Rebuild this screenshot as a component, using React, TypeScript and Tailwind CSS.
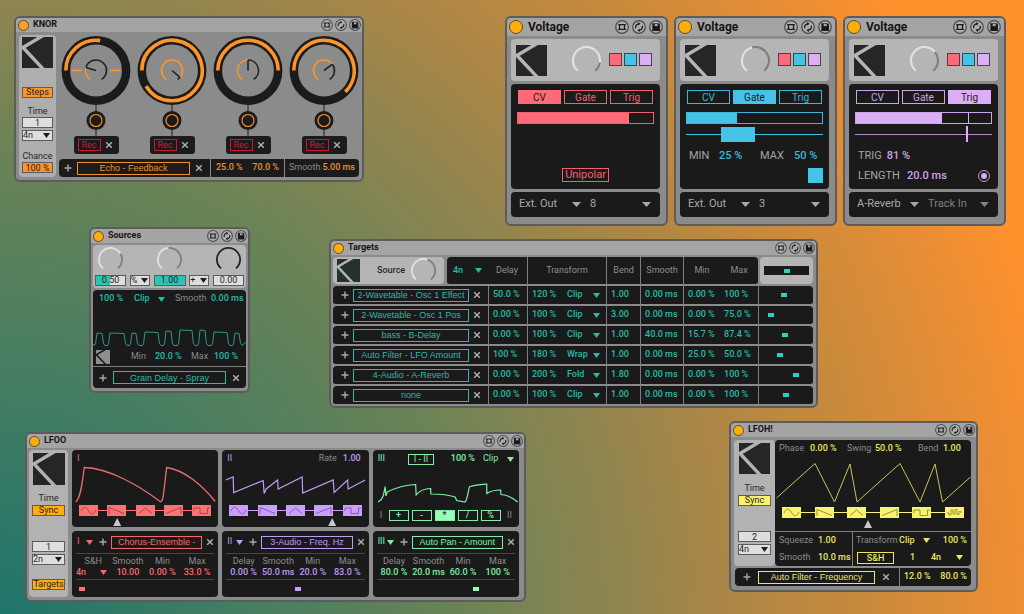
import { useId, type ReactNode } from "react";
import clsx from "clsx";

const TARGET_ROWS = [
  { name: "2-Wavetable - Osc 1 Effect", delay: "50.0 %", amount: "120 %", mode: "Clip", bend: "1.00", smooth: "0.00 ms", min: "0.00 %", max: "100 %", pos: 18 },
  { name: "2-Wavetable - Osc 1 Pos", delay: "0.00 %", amount: "100 %", mode: "Clip", bend: "3.00", smooth: "0.00 ms", min: "0.00 %", max: "75.0 %", pos: 5 },
  { name: "bass - B-Delay", delay: "0.00 %", amount: "100 %", mode: "Clip", bend: "1.00", smooth: "40.0 ms", min: "15.7 %", max: "87.4 %", pos: 19 },
  { name: "Auto Filter - LFO Amount", delay: "100 %", amount: "180 %", mode: "Wrap", bend: "1.00", smooth: "0.00 ms", min: "25.0 %", max: "50.0 %", pos: 14 },
  { name: "4-Audio - A-Reverb", delay: "0.00 %", amount: "200 %", mode: "Fold", bend: "1.80", smooth: "0.00 ms", min: "0.00 %", max: "100 %", pos: 30 },
  { name: "none", delay: "0.00 %", amount: "100 %", mode: "Clip", bend: "1.00", smooth: "0.00 ms", min: "0.00 %", max: "100 %", pos: 20 },
];

const KNOBS = [
  { ring: 98, value: 0.25, marks: true },
  { ring: 329, value: 0.94 },
  { ring: 180, value: 0.5 },
  { ring: 225, value: 0.68 },
];

const SHAPES: Record<string, string> = {
  sine: "M2 6 C4 1 7 1 9.5 5.500 S15 10 17 5",
  down: "M2 9 V2.500 L17 8.500",
  tri: "M3 8.500 L9.500 3 L16 8.500",
  up: "M2 8.500 L17 2.500 V9",
  square: "M2 6 V3 H8 V8.500 H15.500 V3 H18",
  random: "M2 6 H4 V8 H6 V3 H8 V7 H10 V2.500 H12 V7.500 H14 V4.500 H16 V6",
};

/* ---------- small pieces ---------- */

function polar(cx: number, cy: number, r: number, deg: number) {
  const a = (deg * Math.PI) / 180;
  return [cx + r * Math.cos(a), cy + r * Math.sin(a)];
}

function arc(cx: number, cy: number, r: number, from: number, to: number) {
  const [x1, y1] = polar(cx, cy, r, from);
  const [x2, y2] = polar(cx, cy, r, to);
  return `M${x1} ${y1} A${r} ${r} 0 ${to - from > 180 ? 1 : 0} 1 ${x2} ${y2}`;
}

function Dial({ value, className, on = "#e2e2e2", off = "#7d7d7d" }: { value: number; className: string; on?: string; off?: string }) {
  const mid = 130 + 280 * value;
  return (
    <svg viewBox="0 0 28 28" className={className} fill="none" strokeWidth="2">
      {value < 1 && <path d={arc(14, 14, 13, mid, 410)} stroke={off} />}
      <path d={arc(14, 14, 13, 130, mid)} stroke={on} />
    </svg>
  );
}

function Logo({ className, line = "#b2b2b2", fill = "#262626" }: { className: string; line?: string; fill?: string }) {
  return (
    <svg viewBox="0 0 31 31" className={clsx("shrink-0", className)}>
      <rect width="31" height="31" fill={fill} />
      <path d="M22 -2 L1 10.500 L23 34" fill="none" stroke={line} strokeWidth="3.4" />
    </svg>
  );
}

interface SelectProps {
  value: string;
  label: string;
  className?: string;
  arrow?: string;
  size?: string;
}

function Select({ value, label, className, arrow = "right-0", size = "h-[5px] w-[7px]" }: SelectProps) {
  return (
    <span className={clsx("relative flex items-center", className)}>
      <select aria-label={label} defaultValue={value} className="h-full w-full appearance-none bg-transparent outline-none">
        <option>{value}</option>
      </select>
      <svg viewBox="0 0 8 6" preserveAspectRatio="none" className={clsx("pointer-events-none absolute", arrow, size)}>
        <path d="M0 0 H8 L4 6 Z" fill="currentColor" />
      </svg>
    </span>
  );
}

function AddButton() {
  return (
    <button aria-label="Add" className="flex w-4 shrink-0 items-center justify-center text-[#a8a8a8]">
      <svg viewBox="0 0 8 8" className="size-2" stroke="currentColor" strokeWidth="1.4">
        <path d="M4 0.500 V7.500 M0.500 4 H7.500" />
      </svg>
    </button>
  );
}

function ClearButton() {
  return (
    <button aria-label="Clear" className="flex w-4 shrink-0 items-center justify-center text-[#b0b0b0]">
      <svg viewBox="0 0 8 8" className="size-2" stroke="currentColor" strokeWidth="1.4">
        <path d="M1.200 1.200 L6.800 6.800 M6.800 1.200 L1.200 6.800" />
      </svg>
    </button>
  );
}

function MapButton({ children, className }: { children: ReactNode; className?: string }) {
  return (
    <button
      className={clsx(
        "block h-[13px] border border-current font-['Liberation_Sans',Arial,sans-serif] text-[9px] leading-[10px] font-normal whitespace-nowrap",
        className,
      )}
    >
      {children}
    </button>
  );
}

function HeaderIcons({ big }: { big?: boolean }) {
  const size = big ? "size-[14px]" : "size-3";
  const icons = [
    { label: "Unfold", body: <path d="M4.500 4.700 H9.500 V9.300 H4.500 Z M3.200 4.700 H10.800 M3.200 9.300 H10.800" /> },
    {
      label: "Swap",
      body: (
        <>
          <path d="M3.800 8.300 A3.400 3.400 0 0 1 6.500 3.800 M10.200 5.700 A3.400 3.400 0 0 1 7.500 10.200" />
          <path d="M6 2 L8.600 3.700 L6.200 5.500 Z M8 12 L5.400 10.300 L7.800 8.500 Z" fill="#1c1c1c" stroke="none" />
        </>
      ),
    },
    {
      label: "Save",
      body: (
        <>
          <path d="M4 4 H9.500 L10.300 5 V10.300 H4 Z" fill="#161616" />
          <path d="M5.700 3.800 H8.700 V6.200 H5.700 Z" fill="#a8a8a8" stroke="none" />
        </>
      ),
    },
  ];
  return (
    <span className={clsx("ml-auto flex", big ? "gap-[3px]" : "gap-[2px]")}>
      {icons.map((icon) => (
        <button key={icon.label} aria-label={icon.label}>
          <svg viewBox="0 0 14 14" className={size} fill="none" stroke="#1c1c1c" strokeWidth="1.3">
            <circle cx="7" cy="7" r="6.300" stroke="#4a4a4a" strokeWidth="1.200" fill="#adadad" />
            {icon.body}
          </svg>
        </button>
      ))}
    </span>
  );
}

interface DeviceProps {
  title: string;
  className: string;
  dot?: string;
  big?: boolean;
  children: ReactNode;
}

function Device({ title, className, dot = "bg-[#ffae0b]", big, children }: DeviceProps) {
  return (
    <section className={clsx("absolute rounded-md border-2 border-[#5c5c5c] bg-[#8b8b8b]", className)}>
      <header
        className={clsx(
          "flex items-center rounded-t bg-[#a4a4a4] pl-[2px] font-bold text-[#141414]",
          big ? "h-[18px] gap-[5px] pr-[3px] text-[12px]" : "h-[14px] gap-1 pr-px text-[9px]",
        )}
      >
        <button
          aria-label="Device activator"
          className={clsx("shrink-0 rounded-full border border-[#5e4a28]", dot, big ? "size-[14px]" : "size-[11px]")}
        />
        <h2>{title}</h2>
        <HeaderIcons big={big} />
      </header>
      {children}
    </section>
  );
}

const box = "h-[11px] w-full border border-[#5c5c5c] text-center text-[9px] leading-none text-[#1e1e1e]";

function TimeBoxes({ amount, unit, id, gap }: { amount: string; unit: string; id: string; gap: string }) {
  return (
    <>
      <input id={id} defaultValue={amount} className={clsx(box, gap, "shrink-0 bg-[#dedede] outline-none")} />
      <Select
        label="Unit"
        value={unit}
        arrow="right-[2px]"
        className="mt-[2px] h-[11px] w-full shrink-0 border border-[#5c5c5c] bg-[#dedede] text-[9px] leading-none text-[#1e1e1e]"
      />
    </>
  );
}

function ShapeRow({ shapes, color, line }: { shapes: string[]; color: string; line: string }) {
  return (
    <div className="flex h-[11px] items-center px-[7px]">
      {shapes.map((name, i) => (
        <span key={name} className={clsx("flex items-center", i > 0 && "flex-1")}>
          {i > 0 && <span className={clsx("h-px flex-1", color)} />}
          <button aria-label={name} className={clsx("h-[11px] w-[19px] shrink-0", color)}>
            <svg viewBox="0 0 19 11" className="h-[11px] w-[19px]" fill="none" stroke={line} strokeWidth="0.9">
              <path d={SHAPES[name]} />
            </svg>
          </button>
        </span>
      ))}
    </div>
  );
}

function Pointer({ at, width }: { at: number; width: number }) {
  return (
    <svg viewBox={`0 0 ${width} 11`} className="h-[11px] w-full">
      <path d={`M${at} 2 L${at + 4} 10 H${at - 4} Z`} fill="#c9c9c9" />
    </svg>
  );
}

/* ---------- KNOR ---------- */

function Knob({ ring, value, marks }: { ring: number; value: number; marks?: boolean }) {
  const mid = 122 + 296 * value;
  const [px, py] = polar(38, 35.5, 10.5, mid);
  return (
    <svg viewBox="0 0 76 101" className="h-[101px] w-full" fill="none">
      <path d="M38 69 V101" stroke="#1f1f1f" strokeWidth="1" />
      <circle cx="38" cy="35.500" r="30.200" stroke="#1b1b1b" strokeWidth="8.500" />
      <path d={arc(38, 35.5, 30.2, 180, 180 + ring)} stroke="#ff9429" strokeWidth="3.600" />
      <path d={arc(38, 35.5, 10.5, mid, 418)} stroke="#222" strokeWidth="1.600" />
      <path d={arc(38, 35.5, 10.5, 122, mid)} stroke="#ff9429" strokeWidth="1.600" />
      <path d={`M38 35.5 L${px} ${py}`} stroke="#222" strokeWidth="1.600" />
      {marks && <path d="M14 35.500 H24 M52 35.500 H62" stroke="#ff9429" strokeWidth="1.300" />}
      <circle cx="38" cy="85.500" r="9.500" fill="#1b1b1b" />
      <circle cx="38" cy="85.500" r="6" stroke="#ff9429" strokeWidth="1.100" />
    </svg>
  );
}

function Knor() {
  const id = useId();
  return (
    <Device title="KNOR" className="top-[16px] left-[14px] w-[350px]" dot="bg-[#ff9f2a]">
      <div className="flex gap-[2px] pt-[3px] pb-[3px] pl-[3px]">
        <div className="flex w-[37px] shrink-0 flex-col items-center rounded bg-[#aeaeae] px-[3px] pt-[2px] text-[9px] leading-[10px] text-[#2a2a2a]">
          <Logo className="size-[31px]" />
          <button className={clsx(box, "mt-[19px] bg-[#ff9429]")}>Steps</button>
          <label htmlFor={id} className="mt-2">Time</label>
          <TimeBoxes id={id} amount="1" unit="4n" gap="mt-px" />
          <label htmlFor={`${id}-chance`} className="mt-[10px]">Chance</label>
          <input id={`${id}-chance`} defaultValue="100 %" className={clsx(box, "mt-px bg-[#ff9429] outline-none")} />
        </div>

        <div className="min-w-0 flex-1">
          <div className="grid grid-cols-4">
            {KNOBS.map((knob, i) => (
              <div key={i} className="flex flex-col items-center">
                <Knob {...knob} />
                <div className="flex h-[18px] w-[45px] items-center rounded-[3px] bg-[#1b1b1b] pl-1">
                  <button className="h-3 w-[23px] border border-[#d3142f] text-[9px] leading-[10px] text-[#d3142f]">Rec</button>
                  <ClearButton />
                </div>
              </div>
            ))}
          </div>

          <div className="mt-[5px] mr-[3px] ml-px flex h-[18px] gap-px overflow-hidden rounded text-[9px] font-medium text-[#f0912d]">
            <div className="flex w-[151px] items-center gap-px bg-[#1b1b1b] pl-px">
              <AddButton />
              <MapButton className="w-[113px]">Echo - Feedback</MapButton>
              <ClearButton />
            </div>
            <div className="flex w-[73px] items-center justify-between bg-[#1b1b1b] px-[5px]">
              <span>25.0 %</span>
              <span>70.0 %</span>
            </div>
            <div className="flex flex-1 items-center justify-between bg-[#1b1b1b] px-1">
              <span className="font-normal text-[#8a8a8a]">Smooth</span>
              <span>5.00 ms</span>
            </div>
          </div>
        </div>
      </div>
    </Device>
  );
}

/* ---------- Voltage ---------- */

interface VoltageProps {
  className: string;
  mode: "CV" | "Gate" | "Trig";
  text: string;
  fill: string;
  dial: number;
  level: number;
  out: string;
  channel: string;
  mutedChannel?: boolean;
  children: ReactNode;
}

function Voltage({ className, mode, text, fill, dial, level, out, channel, mutedChannel, children }: VoltageProps) {
  return (
    <Device big title="Voltage" className={clsx("top-[16px] w-[163px]", className)}>
      <div className="flex flex-col gap-[3px] pt-[3px] pr-[6px] pb-[7px] pl-1">
        <div className="flex h-[42px] items-center rounded bg-[#b5b5b5] pr-2 pl-[5px]">
          <Logo className="size-[31px]" line="#b5b5b5" />
          <Dial value={dial} className="ml-[25px] size-[29px]" />
          <span className="mb-[2px] ml-auto flex gap-[2px]">
            <button aria-label="Pink" className="size-[13px] border border-[#444] bg-[#ff6a78]" />
            <button aria-label="Blue" className="size-[13px] border border-[#444] bg-[#45c3e6]" />
            <button aria-label="Violet" className="size-[13px] border border-[#444] bg-[#dcaef5]" />
          </span>
        </div>

        <div className={clsx("h-[105px] rounded bg-[#1a1a1a] px-[6px] pt-[6px] text-[11px]", text)}>
          <div className="grid grid-cols-3 gap-[3px] px-px">
            {["CV", "Gate", "Trig"].map((name) => (
              <button
                key={name}
                className={clsx(
                  "h-[14px] border text-[10px] leading-[13px]",
                  name === mode ? ["border-transparent text-[#1a1a1a]", fill] : "border-current",
                )}
              >
                {name}
              </button>
            ))}
          </div>
          <div className="relative mt-2 h-3 border border-current">
            <div className={clsx("h-full", fill)} style={{ width: `${level}%` }} />
            {mode === "Trig" && <span className={clsx("absolute inset-y-0 left-[112px] w-px", fill)} />}
          </div>
          {children}
        </div>

        <div className="flex h-[25px] items-center rounded bg-[#1a1a1a] pr-[9px] pl-2 text-[11px] text-[#a9a9a9]">
          <Select label="Output" value={out} className="w-[62px]" size="h-[5px] w-[9px]" />
          <Select
            label="Channel"
            value={channel}
            className={clsx("ml-[9px] flex-1", mutedChannel && "text-[#808080]")}
            size="h-[5px] w-[9px]"
          />
        </div>
      </div>
    </Device>
  );
}

/* ---------- Sources ---------- */

const PULSES = [
  [4, 9, 5], [17, 31, 5], [39, 43, 5], [52, 65, 4], [73, 78, 3], [87, 99, 2], [107, 112, 2], [121, 134, 4], [142, 146, 5],
];

function Sources() {
  const wave = PULSES.map(([a, b, y]) => `L${a - 2.5} 37.5 Q${a - 1} 36 ${a - 1} 32 L${a} ${y + 20} L${b} ${y + 20.5} L${b + 1} 32 Q${b + 1} 36 ${b + 3} 37.5`).join(" ");
  return (
    <Device title="Sources" className="top-[227px] left-[89px] w-[161px]">
      <div className="px-[2px] pt-[2px] pb-[3px]">
        <div className="grid h-[43px] grid-cols-[31px_20px_32px_20px_31px] justify-between rounded bg-[#b5b5b5] px-[2px] pt-[2px] text-[#1e1e1e]">
          <Dial value={0.71} className="mx-auto size-[25px]" />
          <span />
          <Dial value={0.48} className="mx-auto size-[25px]" />
          <span />
          <Dial value={1} on="#222" className="mx-auto size-[25px]" />
          <input aria-label="Depth" defaultValue="0.50" className={clsx(box, "bg-linear-to-r from-[#2cc4b4] from-50% to-[#dedede] to-50%")} />
          <Select label="Mode" value="%" arrow="right-px" className={clsx(box, "bg-[#dedede]")} />
          <input aria-label="Scale" defaultValue="1.00" className={clsx(box, "bg-[#2cc4b4]")} />
          <Select label="Operator" value="+" arrow="right-px" className={clsx(box, "bg-[#dedede]")} />
          <input aria-label="Offset" defaultValue="0.00" className={clsx(box, "bg-[#dedede]")} />
        </div>

        <div className="mt-[2px] rounded bg-[#1a1a1a] text-[9px] font-medium text-[#2bb9aa]">
          <div className="grid h-[18px] grid-cols-[35px_41px_36px_1fr] items-center pl-[6px] whitespace-nowrap">
            <span>100 %</span>
            <Select label="Transform" value="Clip" className="mr-[10px]" />
            <span className="font-normal text-[#8a8a8a]">Smooth</span>
            <span>0.00 ms</span>
          </div>
          <svg viewBox="0 0 153 40" className="h-[40px] w-full" fill="none" stroke="#279a8e" strokeWidth="1">
            <path d={`M0 36 ${wave} L153 34`} />
          </svg>
          <div className="grid h-[18px] grid-cols-[35px_24px_36px_23px_1fr] items-center pl-[3px] whitespace-nowrap">
            <Logo className="size-[14px]" fill="#8e8e8e" line="#1a1a1a" />
            <span className="font-normal text-[#8a8a8a]">Min</span>
            <span>20.0 %</span>
            <span className="font-normal text-[#8a8a8a]">Max</span>
            <span>100 %</span>
          </div>
          <div className="flex h-[22px] items-center border-t border-[#7d7d7d] pl-[2px]">
            <AddButton />
            <MapButton className="mx-[2px] w-[113px]">Grain Delay - Spray</MapButton>
            <ClearButton />
          </div>
        </div>
      </div>
    </Device>
  );
}

/* ---------- Targets ---------- */

function Targets() {
  const th = "border-b-2 border-[#8b8b8b] bg-[#1a1a1a] p-0 text-[9px] font-normal text-[#8f8f8f]";
  const td = "h-[20px] border-b-2 border-[#8b8b8b] bg-[#1a1a1a] p-0 pl-1 whitespace-nowrap";
  const rule = "border-l border-l-[#7d7d7d]";
  return (
    <Device title="Targets" className="top-[239px] left-[329px] w-[489px]">
      <div className="pt-[2px] pr-[3px] pl-[2px]">
        <table className="w-full table-fixed border-separate border-spacing-0 text-[9px] font-medium text-[#2bb9aa]">
          <colgroup>
            <col className="w-[114px]" />
            <col className="w-[41px]" />
            <col className="w-[39px]" />
            <col className="w-[36px]" />
            <col className="w-[43px]" />
            <col className="w-[34px]" />
            <col className="w-[43px]" />
            <col className="w-[37px]" />
            <col className="w-[38px]" />
            <col />
          </colgroup>
          <thead>
            <tr className="h-[29px]">
              <th className="border-b-2 border-[#8b8b8b] p-0 pr-[3px]">
                <div className="flex h-[27px] items-center rounded bg-[#b5b5b5] pl-1 font-medium text-[#2a2a2a]">
                  <Logo className="size-[23px]" fill="#26302f" line="#b5b5b5" />
                  <span className="ml-[17px]">Source</span>
                  <Dial value={0.57} className="ml-[6px] size-[25px]" />
                </div>
              </th>
              <th colSpan={2} className={clsx(th, "rounded-l")}>
                <div className="flex items-center pl-[6px]">
                  <Select label="Rate" value="4n" className="w-[29px] font-medium text-[#2bb9aa]" />
                  <span className="ml-[14px]">Delay</span>
                </div>
              </th>
              <th colSpan={2} className={clsx(th, rule)}>Transform</th>
              <th className={clsx(th, rule)}>Bend</th>
              <th className={clsx(th, rule)}>Smooth</th>
              <th className={clsx(th, rule)}>Min</th>
              <th className={clsx(th, "rounded-r")}>Max</th>
              <th className="border-b-2 border-[#8b8b8b] p-0 pl-[2px]">
                <div className="flex h-[27px] items-center rounded bg-[#b5b5b5] px-1">
                  <div className="flex h-[9px] w-full items-center justify-center bg-[#1a1a1a]">
                    <span className="h-1 w-[6px] bg-[#2cd0be]" />
                  </div>
                </div>
              </th>
            </tr>
          </thead>
          <tbody>
            {TARGET_ROWS.map((row) => (
              <tr key={row.name}>
                <td colSpan={2} className={clsx(td, "rounded-l")}>
                  <div className="flex items-center">
                    <AddButton />
                    <MapButton className="w-[116px]">{row.name}</MapButton>
                    <ClearButton />
                  </div>
                </td>
                <td className={clsx(td, rule)}>{row.delay}</td>
                <td className={clsx(td, rule)}>{row.amount}</td>
                <td className={td}>
                  <Select label="Transform mode" value={row.mode} className="w-[33px]" />
                </td>
                <td className={clsx(td, rule)}>{row.bend}</td>
                <td className={clsx(td, rule)}>{row.smooth}</td>
                <td className={clsx(td, rule)}>{row.min}</td>
                <td className={td}>{row.max}</td>
                <td className={clsx(td, rule, "rounded-r")}>
                  <span className="block h-1 w-[6px] bg-[#2cd0be]" style={{ marginLeft: row.pos }} />
                </td>
              </tr>
            ))}
          </tbody>
        </table>
      </div>
    </Device>
  );
}

/* ---------- LFOO ---------- */

interface LaneProps {
  text: string;
  dot: string;
  lane: string;
  target: string;
  first: string;
  values: string[];
  pos: number;
}

function Lane({ text, dot, lane, target, first, values, pos }: LaneProps) {
  return (
    <div className={clsx("h-[66px] rounded bg-[#1a1a1a] text-[9px]", text)}>
      <div className="flex h-[22px] items-center pl-[5px]">
        <Select label="Lane" value={lane} className="w-[16px] shrink-0" />
        <span className="ml-[2px] flex"><AddButton /></span>
        <MapButton className="min-w-0 flex-1">{target}</MapButton>
        <ClearButton />
      </div>
      <div className="mx-1 grid h-[27px] grid-cols-4 content-center border-y border-[#454545] text-center leading-[11px] whitespace-nowrap">
        {[first, "Smooth", "Min", "Max"].map((label) => (
          <span key={label} className="text-[#8c8c8c]">{label}</span>
        ))}
        {values.map((value, i) =>
          value === "4n" ? (
            <Select key={i} label="Hold" value={value} className="mr-1 h-[11px] font-medium" />
          ) : (
            <span key={i} className="font-medium">{value}</span>
          ),
        )}
      </div>
      <div className="flex h-[17px] items-center">
        <span className={clsx("h-1 w-[6px]", dot)} style={{ marginLeft: pos }} />
      </div>
    </div>
  );
}

function Lfoo() {
  const id = useId();
  const shapes = ["sine", "down", "tri", "up", "square"];
  const panel = "flex h-[77px] flex-col rounded bg-[#1a1a1a] text-[9px]";
  const head = "flex h-[15px] items-center px-[5px] pt-[3px]";
  return (
    <Device title="LFOO" className="top-[432px] left-[25px] w-[501px]">
      <div className="flex gap-1 pt-[2px] pr-[5px] pb-[3px] pl-[2px]">
        <div className="flex w-[39px] shrink-0 flex-col items-center rounded bg-[#b2b2b2] px-[3px] pt-[3px] text-[9px] leading-[10px] text-[#2a2a2a]">
          <Logo className="size-[32px]" />
          <label htmlFor={id} className="mt-2">Time</label>
          <button className={clsx(box, "mt-[2px] bg-[#ffae0b]")}>Sync</button>
          <TimeBoxes id={id} amount="1" unit="2n" gap="mt-[25px]" />
          <button className={clsx(box, "mt-[14px] bg-[#ffae0b]")}>Targets</button>
        </div>

        <div className="grid min-w-0 flex-1 grid-cols-3 gap-1">
          <div className={clsx(panel, "text-[#ee6b6c]")}>
            <div className={head}>I</div>
            <svg viewBox="0 0 146 40" className="h-[40px] w-full" fill="none" stroke="currentColor" strokeWidth="1.300">
              <path d="M3.500 37 C8 34 10 20 12 2.500 C36 3 66 20 88 36.500 Q89.500 37.500 91 32 L94.500 2.500 C112 5 130 20 143 36.500" />
            </svg>
            <ShapeRow shapes={shapes} color="bg-[#fa7273]" line="#a83c40" />
            <Pointer at={45} width={146} />
          </div>
          <div className={clsx(panel, "text-[#bf9bf2]")}>
            <div className={head}>
              <span>II</span>
              <span className="ml-auto text-[#8c8c8c]">Rate</span>
              <span className="mr-[3px] ml-[6px] font-medium">1.00</span>
            </div>
            <svg viewBox="0 0 146 40" className="h-[40px] w-full" fill="none" stroke="currentColor" strokeWidth="1.200">
              <path d="M3.500 15 L11 12 L11.500 27.500 L41 15.500 L42 28.500 L44 24 L55.500 15 L56 24 L80 12 L80.500 28 L111 15 L112 27.500 L125.500 15 L126 24 L143 15" />
            </svg>
            <ShapeRow shapes={shapes} color="bg-[#c8a0fb]" line="#7a53ae" />
            <Pointer at={110} width={146} />
          </div>
          <div className={clsx(panel, "text-[#84eca6]")}>
            <div className={head}>
              <span>III</span>
              <button className="ml-[23px] h-[11px] w-[26px] border border-current leading-[9px]">I - II</button>
              <span className="ml-auto font-medium">100 %</span>
              <Select label="Transform" value="Clip" className="ml-2 w-[31px]" />
            </div>
            <svg viewBox="0 0 146 45" className="h-[45px] w-full" fill="none" stroke="currentColor" strokeWidth="1.200">
              <path d="M5 37 C7 36 9 34 10 31 L12 21.500 L12.700 31 L14 27 C22 23 34 20 42.500 19.500 L43 30 C47 25 52 23.500 57.500 23.500 L57.700 29 C66 29 76 30 82 32 L83.500 35.500 L92 37 C95 33 95 24 96.500 21.500 C102 20 108 19.500 113.500 19 L113.700 28.500 C118 25.500 122 25 127.500 25 L127.700 29.500 C134 30 140 33 144.500 37" />
            </svg>
            <div className="flex h-[11px] items-center px-[7px] text-[#8c8c8c]">
              <span>I</span>
              <span className="flex flex-1 justify-center gap-[3px] text-[#84eca6]">
                {["+", "-", "*", "/", "%"].map((op) => (
                  <button
                    key={op}
                    className={clsx(
                      "h-[11px] w-[20px] border border-current leading-[9px] font-medium",
                      op === "*" && "bg-[#98ffb8]",
                    )}
                  >
                    <span className={clsx(op === "*" && "text-[#1a1a1a]")}>{op}</span>
                  </button>
                ))}
              </span>
              <span>II</span>
            </div>
          </div>

          <Lane text="text-[#ee6b6c]" dot="bg-[#fa7273]" lane="I" target="Chorus-Ensemble -" first="S&H" values={["4n", "10.00", "0.00 %", "33.0 %"]} pos={7} />
          <Lane text="text-[#bf9bf2]" dot="bg-[#c8a0fb]" lane="II" target="3-Audio - Freq. Hz" first="Delay" values={["0.00 %", "50.0 ms", "20.0 %", "83.0 %"]} pos={73} />
          <Lane text="text-[#84eca6]" dot="bg-[#98ffb8]" lane="III" target="Auto Pan - Amount" first="Delay" values={["80.0 %", "20.0 ms", "60.0 %", "100 %"]} pos={100} />
        </div>
      </div>
    </Device>
  );
}

/* ---------- LFOH! ---------- */

function Lfoh() {
  const id = useId();
  const label = "font-normal text-[#8c8c8c]";
  return (
    <Device title="LFOH!" className="top-[421px] left-[729px] w-[249px]">
      <div className="pt-[3px] pr-[5px] pb-1 pl-[3px] text-[9px]">
        <div className="flex">
          <div className="flex w-[41px] shrink-0 flex-col items-center rounded bg-[#b2b2b2] px-1 pt-[3px] leading-[10px] text-[#2a2a2a]">
            <Logo className="size-[31px]" />
            <label htmlFor={id} className="mt-[9px]">Time</label>
            <button className={clsx(box, "mt-[2px] bg-[#f8f26c]")}>Sync</button>
            <TimeBoxes id={id} amount="2" unit="4n" gap="mt-[25px]" />
          </div>

          <div className="min-w-0 flex-1 rounded bg-[#1a1a1a] font-medium text-[#ece568]">
            <div className="h-[91px]">
              <div className="grid h-[18px] grid-cols-[31px_37px_28px_43px_25px_1fr] items-center pl-1 whitespace-nowrap">
                <span className={label}>Phase</span>
                <span>0.00 %</span>
                <span className={label}>Swing</span>
                <span>50.0 %</span>
                <span className={label}>Bend</span>
                <span>1.00</span>
              </div>
              <svg viewBox="0 0 196 49" className="h-[49px] w-full" fill="none" stroke="#c9c45c" strokeWidth="1">
                <path d="M1.500 40 L40 5.500 L59.500 44 L75 6 L82 44 L125 5.500 L145 44 L160 6 L167.500 44 L195.500 19" />
              </svg>
              <ShapeRow shapes={["sine", "down", "tri", "up", "square", "random"]} color="bg-[#f8f26c]" line="#8e8a2c" />
              <Pointer at={93} width={196} />
            </div>
            <div className="flex h-[35px] border-t border-[#7d7d7d]">
              <div className="grid w-[77px] grid-cols-[39px_1fr] items-center pl-1 whitespace-nowrap">
                <span className={label}>Squeeze</span>
                <span>1.00</span>
                <span className={label}>Smooth</span>
                <span>10.0 ms</span>
              </div>
              <div className="flex-1 border-l border-[#7d7d7d]">
                <div className="flex h-[17px] items-center pl-[3px]">
                  <span className={clsx(label, "w-[43px]")}>Transform</span>
                  <Select label="Transform" value="Clip" className="w-[31px]" />
                  <span className="ml-auto pr-1">100 %</span>
                </div>
                <div className="flex h-[17px] items-center pl-[4px]">
                  <button className="h-3 w-[37px] border border-current leading-[10px]">S&amp;H</button>
                  <span className="w-[37px] text-center">1</span>
                  <Select label="Hold" value="4n" className="w-[32px]" />
                </div>
              </div>
            </div>
          </div>
        </div>

        <div className="mt-[2px] ml-px flex h-[18px] items-center rounded bg-[#1a1a1a] font-medium text-[#ece568]">
          <span className="ml-1 flex"><AddButton /></span>
          <MapButton className="ml-[3px] w-[117px]">Auto Filter - Frequency</MapButton>
          <span className="ml-[3px] flex"><ClearButton /></span>
          <div className="ml-auto flex h-full w-[72px] items-center justify-between border-l border-[#7d7d7d] px-1">
            <span>12.0 %</span>
            <span>80.0 %</span>
          </div>
        </div>
      </div>
    </Device>
  );
}

export default function App() {
  return (
    <main className="relative min-h-screen w-full overflow-hidden bg-[radial-gradient(circle_at_0%_100%,#1f756b_0px,#4f7f5f_300px,#6a8356_460px,#8e8550_610px,#ab8646_730px,#c88a3c_860px,#ec8e34_1010px,#ff922d_1080px)] font-[Roboto,sans-serif]">
      <Knor />

      <Voltage className="left-[505px]" mode="CV" text="text-[#f0606f]" fill="bg-[#ff6a78]" dial={0.85} level={82} out="Ext. Out" channel="8">
        <div className="mt-[44px] flex justify-center">
          <button className="h-[14px] border border-current px-[2px] leading-[12px]">Unipolar</button>
        </div>
      </Voltage>

      <Voltage className="left-[674px]" mode="Gate" text="text-[#3fb5d8]" fill="bg-[#45c3e6]" dial={0.45} level={37} out="Ext. Out" channel="3">
        <div className="mt-[3px] flex h-[15px] items-center">
          <span className="h-px w-[35px] bg-[#45c3e6]" />
          <button aria-label="Gate range" className="h-full w-[34px] bg-[#45c3e6]" />
          <span className="h-px flex-1 bg-[#45c3e6]" />
        </div>
        <div className="mt-[7px] flex items-center pl-[3px] leading-[14px]">
          <span className="w-[30px] text-[#a4a4a4]">MIN</span>
          <span className="w-[41px] font-medium">25 %</span>
          <span className="w-[34px] text-[#a4a4a4]">MAX</span>
          <span className="font-medium">50 %</span>
        </div>
        <div className="mt-[5px] flex justify-end">
          <button aria-label="Gate" className="size-[15px] bg-[#45c3e6]" />
        </div>
      </Voltage>

      <Voltage className="left-[843px]" mode="Trig" text="text-[#cfa3e8]" fill="bg-[#dcaef5]" dial={0.68} level={64} out="A-Reverb" channel="Track In" mutedChannel>
        <input
          type="range"
          aria-label="Threshold"
          defaultValue={82}
          className="mt-[2px] block h-4 w-full appearance-none bg-[linear-gradient(#b58fcb,#b58fcb)] bg-[length:100%_1px] bg-center bg-no-repeat [&::-webkit-slider-thumb]:h-4 [&::-webkit-slider-thumb]:w-[2px] [&::-webkit-slider-thumb]:appearance-none [&::-webkit-slider-thumb]:bg-[#dcaef5]"
        />
        <div className="mt-[7px] flex items-center gap-[5px] pl-[3px] leading-[14px]">
          <span className="text-[#a4a4a4]">TRIG</span>
          <span className="font-medium">81 %</span>
        </div>
        <div className="mt-[6px] flex items-center pl-[3px] leading-[14px]">
          <span className="w-[49px] text-[#a4a4a4]">LENGTH</span>
          <span className="font-medium">20.0 ms</span>
          <input
            type="radio"
            aria-label="Trigger"
            defaultChecked
            className="mr-[2px] ml-auto size-[12px] appearance-none rounded-full border border-[#b9a4c4] bg-[#dcaef5] bg-clip-content p-[2px]"
          />
        </div>
      </Voltage>

      <Sources />
      <Targets />
      <Lfoo />
      <Lfoh />
    </main>
  );
}
